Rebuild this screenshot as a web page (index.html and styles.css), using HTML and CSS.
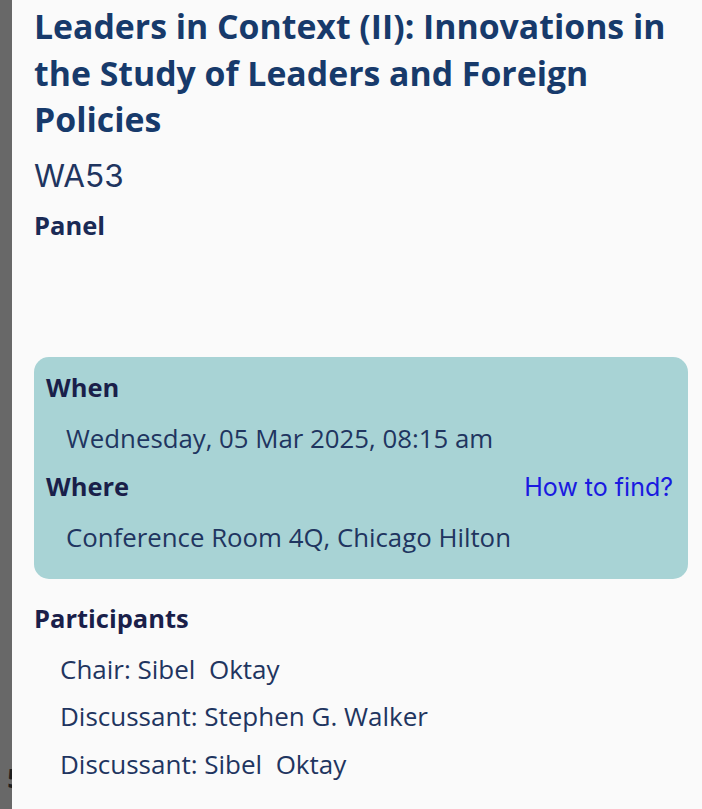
FILE: index.html
```html
<!DOCTYPE html>
<html lang="en">
<head>
<meta charset="utf-8">
<title>Leaders in Context (II)</title>
<link rel="stylesheet" href="styles.css">
</head>
<body>
<div class="page">
  <div class="rail"><span class="rail-num">5</span></div>
  <main class="content">
    <h1 class="title">Leaders in Context (II): Innovations in the Study of Leaders and Foreign Policies</h1>
    <div class="code">WA53</div>
    <div class="type">Panel</div>
    <section class="info">
      <div class="info-head"><span class="label">When</span></div>
      <div class="info-value">Wednesday, 05 Mar 2025, 08:15 am</div>
      <div class="info-head"><span class="label">Where</span><a class="find" href="#">How to find?</a></div>
      <div class="info-value">Conference Room 4Q, Chicago Hilton</div>
    </section>
    <section class="participants">
      <div class="label">Participants</div>
      <ul class="plist">
        <li>Chair: Sibel&nbsp; Oktay</li>
        <li>Discussant: Stephen G. Walker</li>
        <li>Discussant: Sibel&nbsp; Oktay</li>
      </ul>
    </section>
  </main>
</div>
</body>
</html>
```
FILE: styles.css
```css
html, body {
  margin: 0;
  padding: 0;
  height: 100%;
  background: #fafafa;
}
body {
  font-family: "Open Sans", "Liberation Sans", sans-serif;
  overflow: hidden;
}
.page {
  display: flex;
  min-height: 809px;
}
.rail {
  width: 12px;
  flex: none;
  background: #686868;
  overflow: hidden;
  display: flex;
  flex-direction: column;
  justify-content: flex-end;
  align-items: flex-end;
}
.rail-num {
  font-family: "Open Sans", "Liberation Sans", sans-serif;
  font-weight: 700;
  font-size: 26px;
  line-height: 1;
  color: #1e1e1e;
  margin: 0 -10px 18px 0;
}
.content {
  flex: 1;
  padding: 3px 14px 0 22px;
}
.title {
  margin: 0;
  font-size: 33.8px;
  font-weight: 700;
  line-height: 46.5px;
  color: #173a6b;
}
.code {
  font-family: Inter, "Liberation Sans", sans-serif;
  font-size: 31.5px;
  line-height: 40px;
  color: #1f3560;
  margin-top: 13px;
}
.type {
  font-size: 25.5px;
  font-weight: 700;
  color: #1a2a55;
  line-height: 34px;
  margin-top: 12px;
}
.info {
  margin-top: 115px;
  background: #a8d3d5;
  border-radius: 15px;
  padding: 13px 15px 11px 12px;
}
.label {
  font-size: 25.5px;
  font-weight: 700;
  color: #1a1f4a;
  line-height: 34px;
}
.info-head {
  display: flex;
  justify-content: space-between;
  align-items: baseline;
}
.find {
  font-family: Inter, "Liberation Sans", sans-serif;
  font-size: 25px;
  line-height: 32px;
  color: #1a1ae0;
  text-decoration: none;
}
.info-value {
  font-size: 25.8px;
  color: #1f3560;
  line-height: 34px;
  padding: 17px 0 14px 20px;
}
.participants {
  margin-top: 22px;
}
.plist {
  list-style: none;
  margin: 11px 0 0 0;
  padding: 0 0 0 26px;
}
.plist li {
  font-size: 26px;
  color: #1f3560;
  line-height: 47.5px;
}
```
